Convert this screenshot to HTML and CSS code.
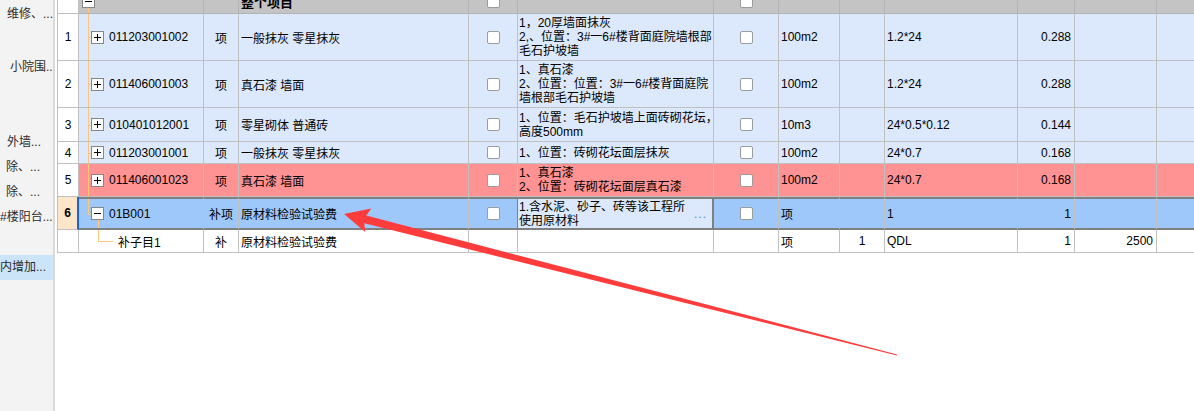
FILE: index.html
```html
<!DOCTYPE html>
<html lang="zh-CN">
<head>
    <meta charset="UTF-8">
    <title>分部分项工程量清单</title>
    <link rel="stylesheet" href="styles.css">
</head>
<body>
    <div class="sidebar">
        <div class="side-item first pad-7">维修、...</div>
        <div class="side-item"></div>
        <div class="side-item pad-10">小院围...</div>
        <div class="side-item"></div>
        <div class="side-item"></div>
        <div class="side-item pad-7">外墙...</div>
        <div class="side-item pad-6">除、...</div>
        <div class="side-item pad-6">除、...</div>
        <div class="side-item">#楼阳台...</div>
        <div class="side-item"></div>
        <div class="side-item active">内增加...</div>
    </div>

    <div class="main">
        <div class="grid">
            <!-- 整个项目 -->
            <div class="row head">
                <div class="cell num"></div>
                <div class="cell code"><span class="tg"></span></div>
                <div class="cell"></div>
                <div class="cell"><b>整个项目</b></div>
                <div class="cell chk"><span class="box"></span></div>
                <div class="cell"></div>
                <div class="cell chk"><span class="box"></span></div>
                <div class="cell"></div>
                <div class="cell"></div>
                <div class="cell"></div>
                <div class="cell"></div>
                <div class="cell"></div>
                <div class="cell"></div>
            </div>

            <div class="row item l3">
                <div class="cell num">1</div>
                <div class="cell code"><span class="tg plus"></span>011203001002</div>
                <div class="cell ctr">项</div>
                <div class="cell">一般抹灰 零星抹灰</div>
                <div class="cell chk"><span class="box"></span></div>
                <div class="cell feat">1，20厚墙面抹灰<br>2,、位置：3#一6#楼背面庭院墙根部<br>毛石护坡墙</div>
                <div class="cell chk"><span class="box"></span></div>
                <div class="cell">100m2</div>
                <div class="cell"></div>
                <div class="cell">1.2*24</div>
                <div class="cell rt">0.288</div>
                <div class="cell"></div>
                <div class="cell"></div>
            </div>

            <div class="row item l3">
                <div class="cell num">2</div>
                <div class="cell code"><span class="tg plus"></span>011406001003</div>
                <div class="cell ctr">项</div>
                <div class="cell">真石漆 墙面</div>
                <div class="cell chk"><span class="box"></span></div>
                <div class="cell feat">1、真石漆<br>2、位置：位置：3#一6#楼背面庭院<br>墙根部毛石护坡墙</div>
                <div class="cell chk"><span class="box"></span></div>
                <div class="cell">100m2</div>
                <div class="cell"></div>
                <div class="cell">1.2*24</div>
                <div class="cell rt">0.288</div>
                <div class="cell"></div>
                <div class="cell"></div>
            </div>

            <div class="row item l2">
                <div class="cell num">3</div>
                <div class="cell code"><span class="tg plus"></span>010401012001</div>
                <div class="cell ctr">项</div>
                <div class="cell">零星砌体 普通砖</div>
                <div class="cell chk"><span class="box"></span></div>
                <div class="cell feat">1、位置：毛石护坡墙上面砖砌花坛，<br>高度500mm</div>
                <div class="cell chk"><span class="box"></span></div>
                <div class="cell">10m3</div>
                <div class="cell"></div>
                <div class="cell">24*0.5*0.12</div>
                <div class="cell rt">0.144</div>
                <div class="cell"></div>
                <div class="cell"></div>
            </div>

            <div class="row item l1">
                <div class="cell num">4</div>
                <div class="cell code"><span class="tg plus"></span>011203001001</div>
                <div class="cell ctr">项</div>
                <div class="cell">一般抹灰 零星抹灰</div>
                <div class="cell chk"><span class="box"></span></div>
                <div class="cell feat">1、位置：砖砌花坛面层抹灰</div>
                <div class="cell chk"><span class="box"></span></div>
                <div class="cell">100m2</div>
                <div class="cell"></div>
                <div class="cell">24*0.7</div>
                <div class="cell rt">0.168</div>
                <div class="cell"></div>
                <div class="cell"></div>
            </div>

            <div class="row item warn">
                <div class="cell num">5</div>
                <div class="cell code"><span class="tg plus"></span>011406001023</div>
                <div class="cell ctr">项</div>
                <div class="cell">真石漆 墙面</div>
                <div class="cell chk"><span class="box"></span></div>
                <div class="cell feat">1、真石漆<br>2、位置：砖砌花坛面层真石漆</div>
                <div class="cell chk"><span class="box"></span></div>
                <div class="cell">100m2</div>
                <div class="cell"></div>
                <div class="cell">24*0.7</div>
                <div class="cell rt">0.168</div>
                <div class="cell"></div>
                <div class="cell"></div>
            </div>

            <div class="row sel">
                <div class="cell num">6</div>
                <div class="cell code last"><span class="tg open"></span>01B001</div>
                <div class="cell ctr">补项</div>
                <div class="cell">原材料检验试验费</div>
                <div class="cell chk pre-edit"><span class="box"></span></div>
                <div class="cell feat edit"><span>1.含水泥、砂子、砖等该工程所<br>使用原材料</span><span class="more">...</span></div>
                <div class="cell chk"><span class="box"></span></div>
                <div class="cell">项</div>
                <div class="cell"></div>
                <div class="cell">1</div>
                <div class="cell rt">1</div>
                <div class="cell"></div>
                <div class="cell"></div>
            </div>

            <div class="row sub">
                <div class="cell num"></div>
                <div class="cell code child">补子目1</div>
                <div class="cell ctr">补</div>
                <div class="cell">原材料检验试验费</div>
                <div class="cell"></div>
                <div class="cell"></div>
                <div class="cell"></div>
                <div class="cell">项</div>
                <div class="cell ctr">1</div>
                <div class="cell">QDL</div>
                <div class="cell rt">1</div>
                <div class="cell rt">2500</div>
                <div class="cell"></div>
            </div>
        </div>
    </div>

    <svg class="arrow" width="1194" height="411" viewBox="0 0 1194 411">
        <polygon points="344,214 371.2,208.4 366.3,215.6 897.1,354.4 896.9,355.6 364.3,223.3 365.2,232" fill="#ff3c3c"/>
    </svg>
</body>
</html>
```

FILE: styles.css
```css
body {
    margin: 0;
    height: 411px;
    display: flex;
    position: relative;
    overflow: hidden;
    background: #fff;
    color: #000;
    font-family: "Liberation Sans", "Noto Sans CJK SC", sans-serif;
    font-size: 12px;
}

/* left tree */
.sidebar {
    width: 53px;
    flex: none;
    background: #f3f3f3;
    border-right: 2px solid #dadada;
    overflow: hidden;
}

.side-item {
    height: 25px;
    line-height: 25px;
    white-space: nowrap;
    color: #2b2b2b;
}

.side-item.first {
    height: 30px;
    line-height: 28px;
}

.side-item.active {
    background: #cce4f8;
}

.pad-6 { padding-left: 6px; }
.pad-7 { padding-left: 7px; }
.pad-10 { padding-left: 10px; }

/* grid */
.main {
    flex: 1;
    margin-left: 2px;
    overflow: hidden;
}

.grid {
    margin-top: -11px;
    border-left: 1px solid #c0c0c0;
    width: max-content;
}

.row {
    display: grid;
    grid-template-columns: 21px 125px 35px 230px 49px 196px 65px 61px 45px 133px 57px 82px 84px;
}

.row.head { height: 25px; }
.row.l3 { height: 47px; }
.row.l2 { height: 34px; }
.row.l1 { height: 22px; }
.row.warn { height: 33px; }
.row.sel { height: 33px; }
.row.sub { height: 23px; }

.cell {
    box-sizing: border-box;
    display: flex;
    align-items: center;
    padding: 0 2px;
    border-right: 1px solid #c0c0c0;
    border-bottom: 1px solid #c0c0c0;
    white-space: nowrap;
    overflow: hidden;
}

.cell.ctr { justify-content: center; }
.cell.rt { justify-content: flex-end; padding-right: 3px; }

.cell.feat {
    padding-left: 1px;
    line-height: 14px;
}

.cell.chk {
    justify-content: center;
    padding: 0;
}

.box {
    width: 13px;
    height: 13px;
    box-sizing: border-box;
    border: 1px solid #9c9c9c;
    border-radius: 2px;
    background: #fff;
}

/* row colours */
.row.head .cell {
    background: #c4c4c4;
    border-color: #b4b4b4;
    font-size: 13px;
}

.row.item .cell { background: #dce9fc; }
.row.warn .cell { background: #ff9292; }

.row.sel .cell {
    background: #9fc8fa;
    border-top: 2px solid #808080;
    border-bottom: 2px solid #808080;
}

.row .cell.num {
    justify-content: center;
    padding: 0;
    background: #fff;
    border-color: #c0c0c0;
}

.row.sel .cell.num {
    background: #fde5c9;
    border-top: none;
    border-bottom: 1px solid #c0c0c0;
    border-right: 2px solid #1a62e0;
    font-weight: bold;
}

.row.sel .cell.pre-edit { border-right-color: #808080; }

.row.sel .cell.edit {
    background: #dce8fb;
    border-right: 2px solid #808080;
}

.more {
    margin-left: auto;
    padding-right: 3px;
    color: #4f86c6;
    letter-spacing: 1px;
}

/* tree lines */
.cell.code {
    position: relative;
    padding-left: 12px;
}

.cell.code::before {
    content: "";
    position: absolute;
    left: 9px;
    top: 0;
    bottom: -1px;
    width: 1px;
    background: #fcc67f;
}

.cell.code::after {
    content: "";
    position: absolute;
    left: 9px;
    top: 50%;
    width: 3px;
    height: 1px;
    background: #fcc67f;
}

.row.head .cell.code { padding-left: 3px; }
.row.head .cell.code::before { top: 50%; }
.row.head .cell.code::after { display: none; }

.cell.code.last::before { bottom: 50%; }

.cell.code.child { padding-left: 39px; }
.cell.code.child::before { left: 19px; bottom: 50%; }
.cell.code.child::after { left: 19px; width: 15px; }

.tg {
    position: relative;
    flex: none;
    width: 13px;
    height: 13px;
    box-sizing: border-box;
    margin-right: 5px;
    border: 1px solid #868686;
    background: #fff;
}

.tg::before {
    content: "";
    position: absolute;
    left: 2px;
    top: 5px;
    width: 7px;
    height: 1px;
    background: #000;
}

.tg.plus::after {
    content: "";
    position: absolute;
    left: 5px;
    top: 2px;
    width: 1px;
    height: 7px;
    background: #000;
}

.tg.open::after {
    content: "";
    position: absolute;
    left: 6px;
    top: 12px;
    width: 1px;
    height: 12px;
    background: #fcc67f;
}

.arrow {
    position: absolute;
    left: 0;
    top: 0;
    pointer-events: none;
}
```
